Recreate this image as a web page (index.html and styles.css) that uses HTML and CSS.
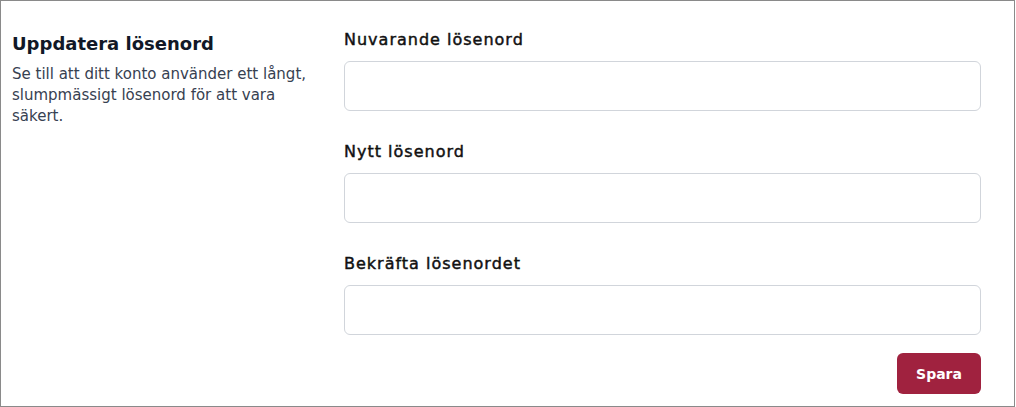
FILE: index.html
```html
<!DOCTYPE html>
<html lang="sv">
<head>
<meta charset="utf-8">
<link rel="stylesheet" href="styles.css">
</head>
<body>
<div class="panel">
  <div class="intro">
    <h2 class="title">Uppdatera lösenord</h2>
    <p class="desc">Se till att ditt konto använder ett långt, slumpmässigt lösenord för att vara säkert.</p>
  </div>
  <form class="form">
    <div class="field">
      <label class="label">Nuvarande lösenord</label>
      <input class="input" type="password">
    </div>
    <div class="field">
      <label class="label">Nytt lösenord</label>
      <input class="input" type="password">
    </div>
    <div class="field">
      <label class="label">Bekräfta lösenordet</label>
      <input class="input" type="password">
    </div>
    <div class="actions">
      <button class="btn" type="button">Spara</button>
    </div>
  </form>
</div>
</body>
</html>
```

FILE: styles.css
```css
* { box-sizing: border-box; }
html, body { margin: 0; padding: 0; background: #fff; }
body { font-family: "DejaVu Sans", "Open Sans", sans-serif; }
.panel {
  width: 1015px;
  height: 407px;
  border: 1px solid #8a8a8a;
  display: flex;
  padding: 27px 33px 0 11px;
}
.intro { width: 305px; margin-right: 27px; padding-top: 2px; }
.title {
  margin: 0;
  font-size: 18px;
  font-weight: 700;
  color: #111827;
  line-height: 28px;
}
.desc {
  margin: 6px 0 0;
  font-size: 15px;
  line-height: 21px;
  color: #374151;
}
.form { flex: 1; display: flex; flex-direction: column; gap: 29px; }
.field { display: flex; flex-direction: column; gap: 9px; }
.label {
  font-size: 16px;
  font-weight: 400;
  letter-spacing: 1px;
  -webkit-text-stroke: 0.45px #111111;
  color: #111111;
  line-height: 24px;
}
.input {
  height: 50px;
  border: 1px solid #d1d5db;
  border-radius: 6px;
  background: #fff;
}
.actions { display: flex; justify-content: flex-end; margin-top: -11px; }
.btn {
  width: 84px;
  height: 41px;
  border: 0;
  border-radius: 6px;
  background: #a0223f;
  color: #fff;
  font-family: inherit;
  font-weight: 700;
  font-size: 14px;
}
```
